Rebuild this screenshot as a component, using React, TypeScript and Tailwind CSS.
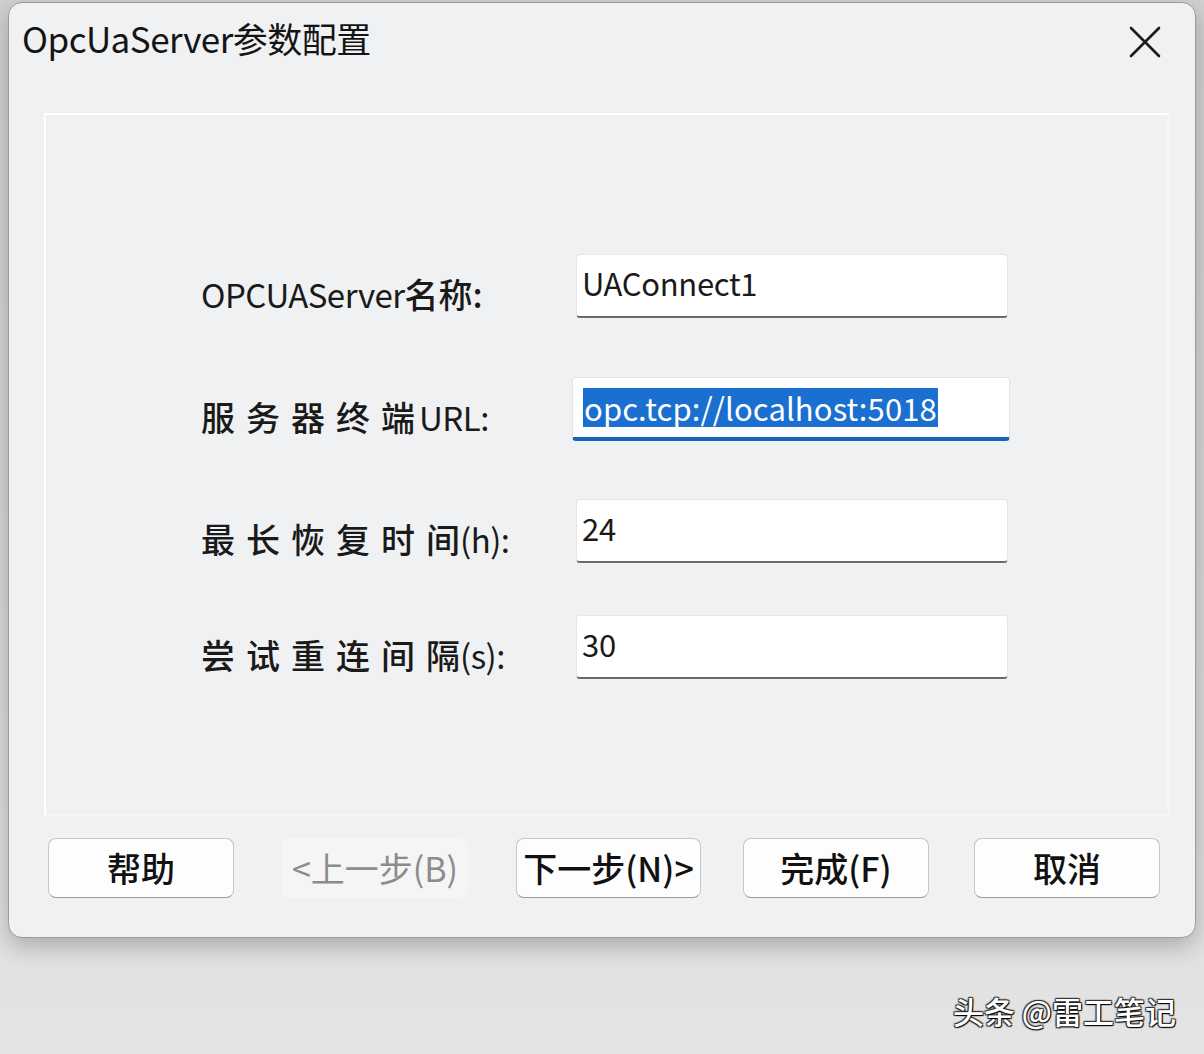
import React from 'react';

const FONT = '"Noto Sans CJK SC", "Noto Sans", sans-serif';

const FIELDS = [
  { cjk: '', latin: 'OPCUAServer', tail: '名称:', value: 'UAConnect1', mt: 'mt-[139px]' },
  { cjk: '服务器终端', latin: 'URL:', tail: '', value: 'opc.tcp://localhost:5018', mt: 'mt-[59px]', focused: true, gap: 'ml-[4px]' },
  { cjk: '最长恢复时间', latin: '(h):', tail: '', value: '24', mt: 'mt-[58px]' },
  { cjk: '尝试重连间隔', latin: '(s):', tail: '', value: '30', mt: 'mt-[52px]' },
];

type FieldProps = { cjk: string; latin: string; tail: string; value: string; mt: string; focused?: boolean; gap?: string };

function Field({ cjk, latin, tail, value, mt, focused, gap }: FieldProps) {
  return (
    <div className={`flex items-center ${mt}`}>
      <div className="w-[530px] pl-[155px] shrink-0 pt-[16px] whitespace-nowrap text-[#1a1a1a] leading-none">
        {cjk && (
          <>
            <span className="text-[34px] font-medium tracking-[11px]">{cjk.slice(0, -1)}</span>
            <span className="text-[34px] font-medium">{cjk.slice(-1)}</span>
          </>
        )}
        <span className={`text-[33px] tracking-[-0.5px] ${gap ?? ''}`}>{latin}</span>
        {tail && <span className="text-[34px] font-medium">{tail}</span>}
      </div>
      {focused ? (
        <div className="ml-[-4px] w-[438px] h-[64px] bg-white rounded-[4px] border border-[#e4e4e4] border-b-[4px] border-b-[#1565c0] flex items-center pl-[10px]">
          <span className="bg-[#1a6fd0] text-white text-[31px] leading-[39px] tracking-[0.1px] px-[1px]">{value}</span>
        </div>
      ) : (
        <div className="w-[432px] h-[64px] bg-white rounded-[4px] border border-[#e6e6e6] border-b-2 border-b-[#6a6a6a] flex items-center pl-[5px] pb-[6px]">
          <span className="text-[31px] leading-none text-[#1a1a1a] tracking-[-0.3px]">{value}</span>
        </div>
      )}
    </div>
  );
}

function Btn({ children, disabled, w = 'w-[186px]' }: { children: React.ReactNode; disabled?: boolean; w?: string }) {
  return (
    <div
      className={`${w} h-[60px] rounded-[8px] flex items-center justify-center text-[34px] leading-none ${
        disabled
          ? 'bg-[#f5f5f5] text-[#8c8c8c]'
          : 'bg-[#fdfdfd] border border-[#c6c6c6] border-b-[#9a9a9a] text-[#111] font-medium'
      }`}
    >
      {children}
    </div>
  );
}

export default function App() {
  return (
    <div
      className="w-[1204px] h-[1054px] bg-gradient-to-b from-[#d2d2d2] via-[#d8d8d8] to-[#e4e4e4] pt-[2px] pl-[8px] overflow-hidden relative"
      style={{ fontFamily: FONT }}
    >
      {/* dialog window */}
      <div className="w-[1188px] h-[936px] bg-[#f0f1f3] rounded-[14px] border border-[#9c9c9c] shadow-[0_8px_24px_rgba(0,0,0,0.25)] flex flex-col">
        {/* title bar */}
        <div className="h-[110px] flex items-start justify-between pl-[13px] pr-[34px] pt-[13px]">
          <span className="text-[35px] leading-[44px] text-[#141414] tracking-[-0.5px]">OpcUaServer参数配置</span>
          <svg width="32" height="32" viewBox="0 0 32 32" className="mt-[10px]">
            <path d="M2 2 L30 30 M30 2 L2 30" stroke="#1a1a1a" strokeWidth="2.6" strokeLinecap="round" />
          </svg>
        </div>

        {/* group box */}
        <div className="ml-[35px] w-[1125px] h-[703px] border-2 border-white border-r-[#f6f6f6] border-b-[#f6f6f6] flex flex-col">
          {FIELDS.map((f) => (
            <Field key={f.value} {...f} />
          ))}
        </div>

        {/* buttons */}
        <div className="flex items-center mt-[22px] pl-[39px] gap-[50px]">
          <Btn>帮助</Btn>
          <div className="-ml-[2px]">
            <Btn disabled>&lt;上一步(B)</Btn>
          </div>
          <div className="-ml-[2px]">
            <Btn w="w-[185px]">下一步(N)&gt;</Btn>
          </div>
          <div className="-ml-[8px]">
            <Btn>完成(F)</Btn>
          </div>
          <div className="-ml-[5px]">
            <Btn>取消</Btn>
          </div>
        </div>
      </div>

      {/* watermark */}
      <div className="absolute right-[28px] bottom-[28px] text-[31px] leading-none text-white font-medium [text-shadow:1px_1px_1px_#000,-1px_-1px_1px_#333,1px_-1px_1px_#333,-1px_1px_1px_#333]">
        头条 @雷工笔记
      </div>
    </div>
  );
}
